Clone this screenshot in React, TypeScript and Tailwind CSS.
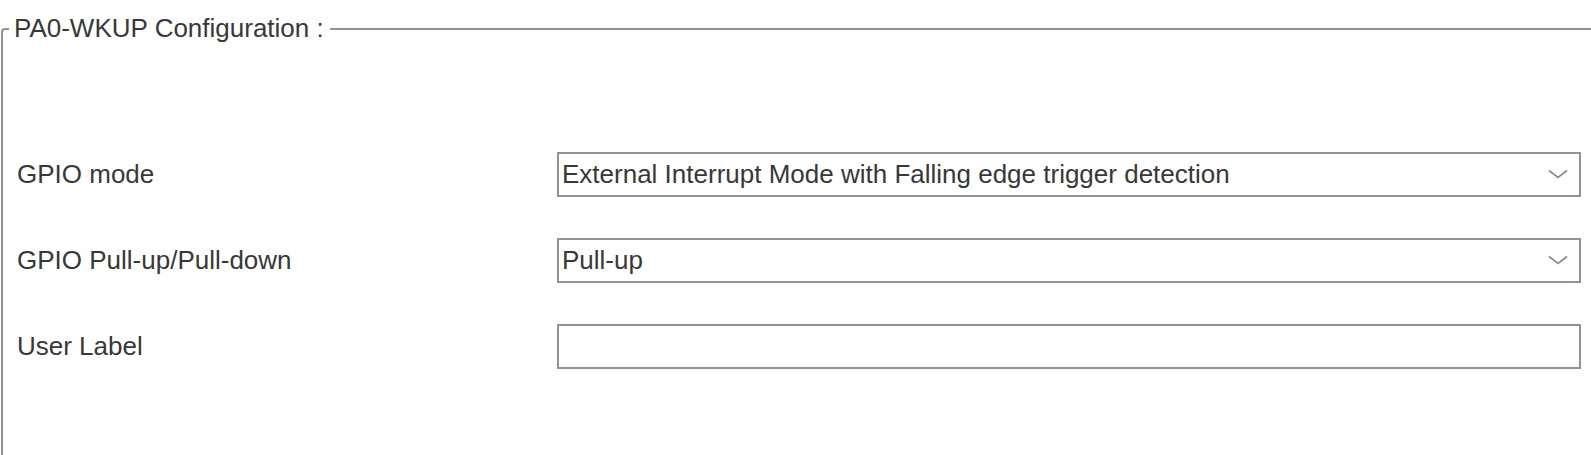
import React from 'react'

const Chevron = () => (
  <svg width='20' height='10' viewBox='0 0 20 10' className='shrink-0'>
    <path d='M1 1.5 L10 8.5 L19 1.5' fill='none' stroke='#8a8a8a' strokeWidth='1.6' />
  </svg>
)

const Select = ({ value }: { value: string }) => (
  <div className='h-[45px] border-2 border-[#909498] bg-white flex items-center pl-[3px] pr-[11px]'>
    <span className='flex-1 truncate'>{value}</span>
    <Chevron />
  </div>
)

const App = () => {
  return (
    <div className='w-[1591px] h-[455px] bg-white overflow-hidden text-[26px] text-[#383838]' style={{ fontFamily: '"Liberation Sans", Arial, sans-serif' }}>
      <fieldset className='ml-[1px] mt-[14px] w-[1650px] h-[600px] border-l-2 border-t-2 border-[#909498] rounded-tl-[4px]'>
        <legend className='ml-[6px] pl-[5px] pr-[6px] leading-[1.15]'>PA0-WKUP Configuration :</legend>

        {/* pin settings */}
        <div className='grid grid-cols-[540px_1024px] gap-y-[41px] items-center pl-[14px] pt-[108px]'>
          <div>GPIO mode</div>
          <Select value='External Interrupt Mode with Falling edge trigger detection' />

          <div>GPIO Pull-up/Pull-down</div>
          <Select value='Pull-up' />

          <div>User Label</div>
          <div className='h-[45px] border-2 border-[#909498] bg-white' />
        </div>
      </fieldset>
    </div>
  )
}

export default App
